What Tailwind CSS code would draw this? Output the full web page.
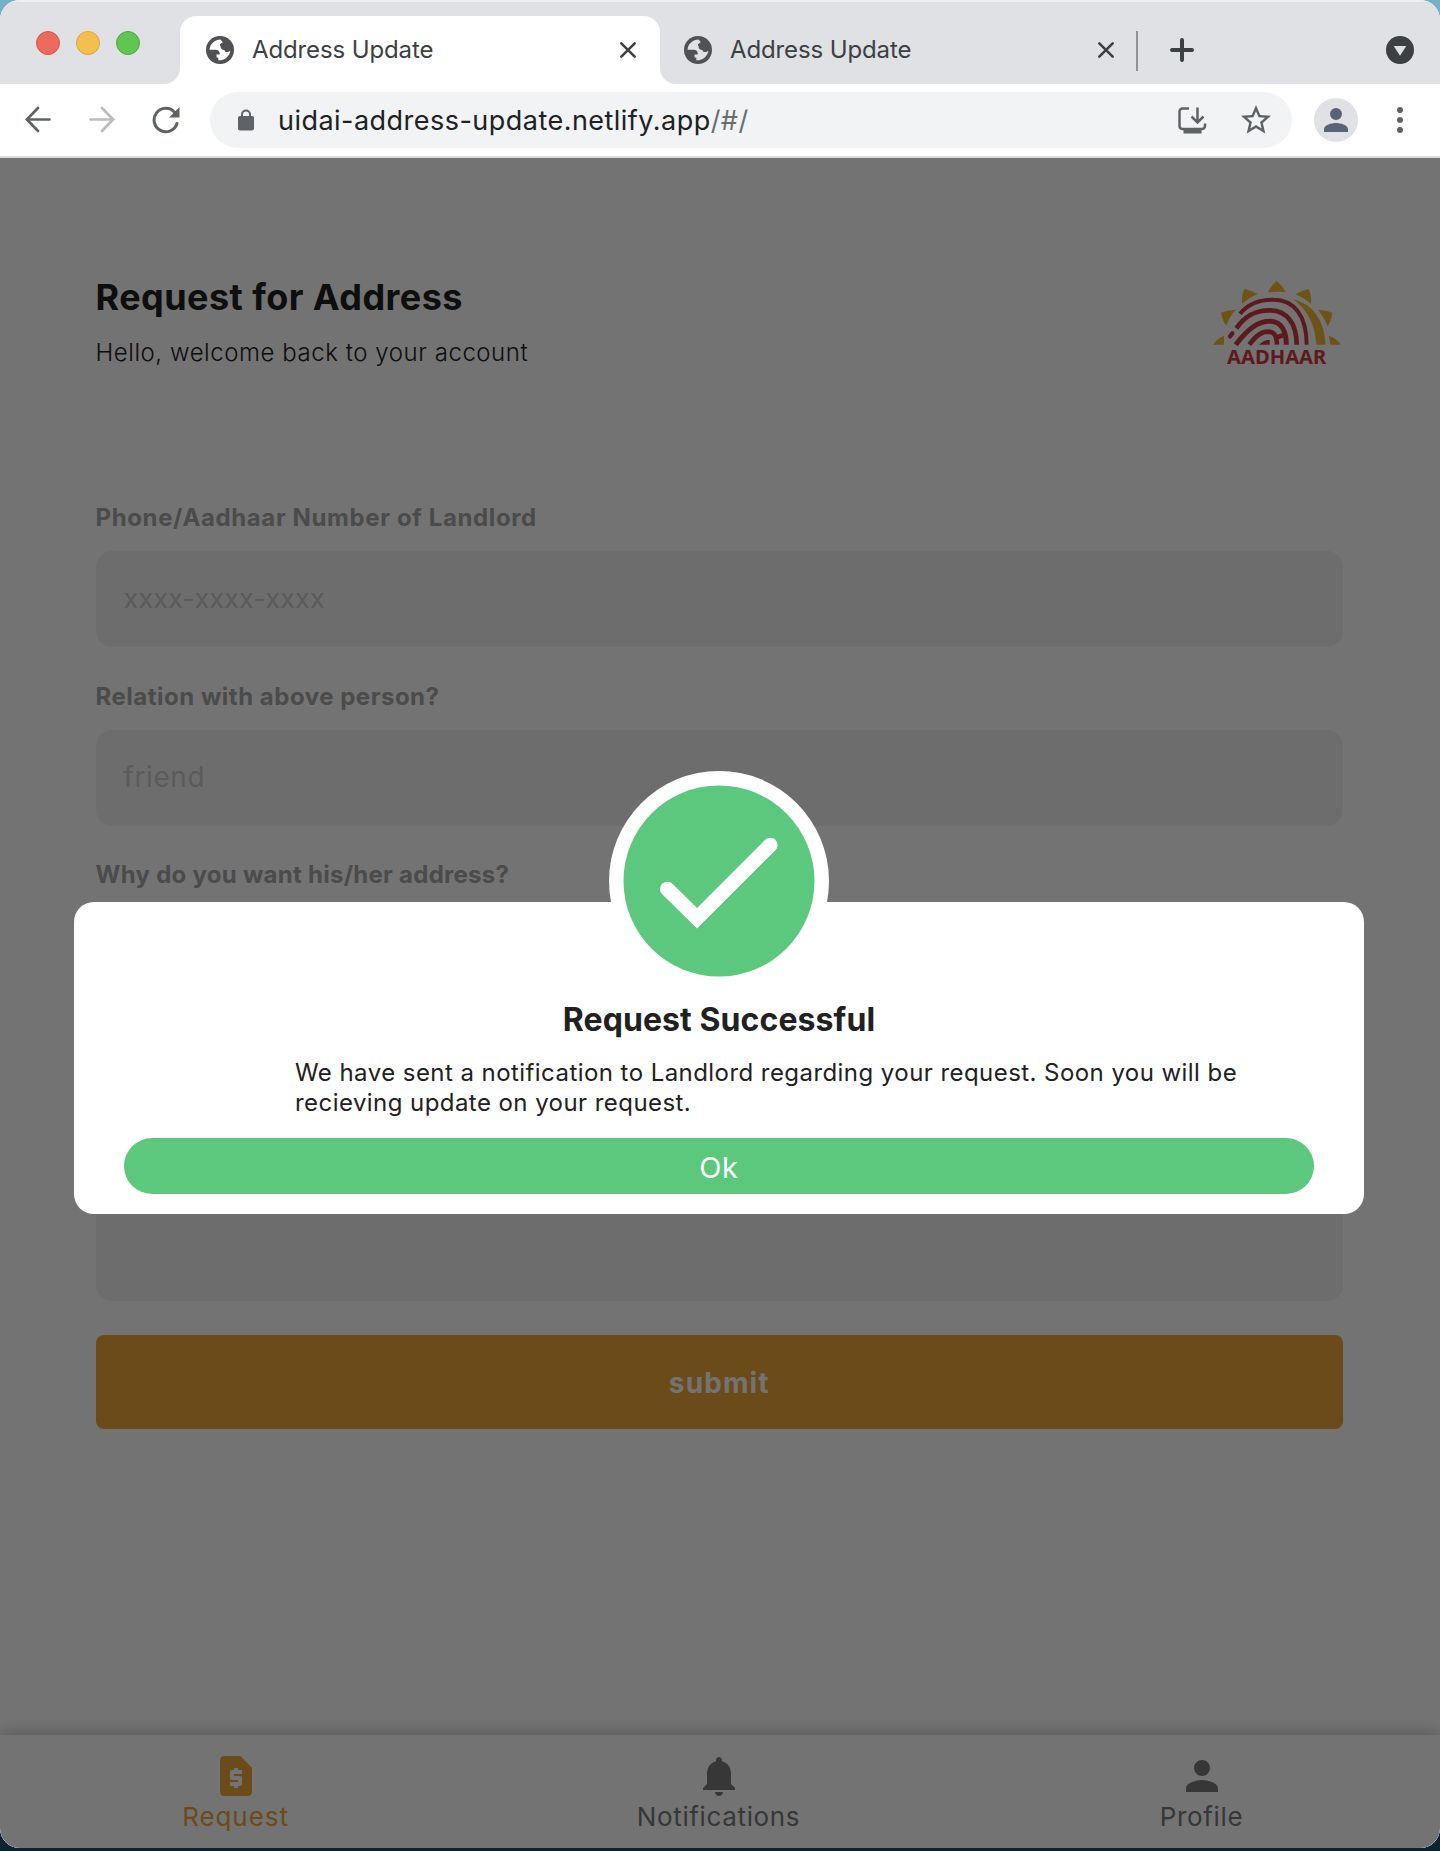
<!DOCTYPE html>
<html lang="en">
<head>
<meta charset="utf-8">
<title>Address Update</title>
<script src="https://cdn.jsdelivr.net/npm/@tailwindcss/browser@4"></script>
</head>
<body class="h-[1851px] w-[1440px] overflow-hidden bg-linear-to-b from-[#79afc6] from-5% to-[#0b2233] to-95% font-['Inter',sans-serif] whitespace-nowrap">
<div class="relative flex h-[1848px] flex-col overflow-hidden rounded-[20px] bg-white">

  <!-- Tab strip -->
  <header class="flex h-[84px] shrink-0 border-t-2 border-[#eceef1] bg-[#dfe1e5] text-[#3c4043]">
    <div class="flex w-[180px] gap-4 pt-[29px] pl-9">
      <span class="size-6 rounded-full border border-[#d5564a] bg-[#ed6a5e]"></span>
      <span class="size-6 rounded-full border border-[#d9a33c] bg-[#f5bf4f]"></span>
      <span class="size-6 rounded-full border border-[#4fa83f] bg-[#61c554]"></span>
    </div>
    <div class="relative mt-[14px] flex w-[480px] items-center rounded-t-2xl bg-white pr-[22px] pl-[26px]">
      <svg class="absolute bottom-0 -left-4 size-4" viewBox="0 0 16 16" fill="#fff"><path d="M16 0v16H0A16 16 0 0 0 16 0z"/></svg>
      <svg class="absolute -right-4 bottom-0 size-4" viewBox="0 0 16 16" fill="#fff"><path d="M0 0v16h16A16 16 0 0 1 0 0z"/></svg>
      <svg class="size-7" viewBox="0 0 28 28"><circle cx="14" cy="14" r="14" fill="#505155"/><path d="M14.6 3.6C8.800 3.600 4 8 3.500 13.700H9.500C12.300 13.700 13.700 15.200 13.700 17.600V18.500H10.500V21.500H12.300V24.300C18.500 24.800 23.800 20.500 24.300 14.500C22.300 16.800 18.700 16.600 18.500 13.900C15.800 13.900 14.600 12.700 14.600 10.200C12.600 8.200 15.500 7.500 16.800 6.300L14.600 3.600z" fill="#fff"/></svg>
      <span class="ml-[18px] flex-1 text-2xl tracking-[-0.12px]">Address Update</span>
      <svg class="size-5" viewBox="0 0 20 20" fill="none" stroke="#3c4043" stroke-width="2.6" stroke-linecap="round"><path d="M3.300 3.300l13.400 13.400M16.700 3.300L3.300 16.700"/></svg>
    </div>
    <div class="mt-[14px] flex w-[476px] items-center pr-5 pl-6">
      <svg class="size-7" viewBox="0 0 28 28"><circle cx="14" cy="14" r="14" fill="#505155"/><path d="M14.600 3.600C8.800 3.600 4 8 3.500 13.700H9.500C12.300 13.700 13.700 15.200 13.700 17.600V18.500H10.500V21.500H12.300V24.300C18.500 24.800 23.800 20.500 24.300 14.500C22.300 16.800 18.700 16.600 18.500 13.900C15.800 13.900 14.600 12.700 14.600 10.200C12.600 8.200 15.500 7.500 16.800 6.300L14.600 3.600z" fill="#dfe1e5"/></svg>
      <span class="ml-[18px] flex-1 text-2xl tracking-[-0.12px]">Address Update</span>
      <svg class="size-5" viewBox="0 0 20 20" fill="none" stroke="#3c4043" stroke-width="2.6" stroke-linecap="round"><path d="M3.300 3.300l13.400 13.400M16.700 3.300L3.300 16.700"/></svg>
    </div>
    <div class="mt-[29px] h-10 w-0.5 bg-[#8f9196]"></div>
    <div class="mt-[14px] flex flex-1 items-center justify-between pr-[26px] pl-8">
      <svg class="size-6" viewBox="0 0 24 24" fill="none" stroke="#3c4043" stroke-width="4" stroke-linecap="round"><path d="M12 2v20M2 12h20"/></svg>
      <svg class="size-7" viewBox="0 0 28 28"><circle cx="14" cy="14" r="14" fill="#3c4043"/><path d="M7.700 10h12.600L14 19.700z" fill="#dfe1e5"/></svg>
    </div>
  </header>

  <!-- Toolbar -->
  <div class="flex h-[74px] shrink-0 items-center border-b-2 border-[#dcdcdc] bg-white pl-[25px]">
    <svg class="h-7 w-[26px]" viewBox="0 0 26 28" fill="none" stroke="#5f6368" stroke-width="2.700" stroke-linecap="round"><path d="M24.500 13.500H2M13 2L1.800 13.500 13 25"/></svg>
    <svg class="ml-[38px] h-7 w-[26px]" viewBox="0 0 26 28" fill="none" stroke="#babcbe" stroke-width="2.700" stroke-linecap="round"><path d="M1.500 13.500h22.500M13 2l11.200 11.500L13 25"/></svg>
    <svg class="ml-[37px] size-7" viewBox="0 0 28 28"><path d="M22.500 6.200A11.700 11.700 0 1 0 25 17.500" fill="none" stroke="#5f6368" stroke-width="3" stroke-linecap="round"/><path d="M27.500 1v10.500H17z" fill="#5f6368"/></svg>
    <div class="ml-[30px] flex h-14 w-[1082px] items-center rounded-full bg-[#f1f3f4] pr-[18px] pl-7">
      <svg class="h-[22px] w-4" viewBox="0 0 16 22"><rect y="7" width="16" height="14.500" rx="2" fill="#5f6368"/><path d="M4 8V5.500a4 4 0 0 1 8 0V8" fill="none" stroke="#5f6368" stroke-width="2"/></svg>
      <span class="ml-6 flex-1 pt-0.5 text-[27px] leading-10 tracking-[0.47px] text-[#202124]">uidai-address-update.netlify.app<span class="text-[#6a6d70]">/#/</span></span>
      <svg class="h-7 w-[30px]" viewBox="0 0 30 28" fill="none" stroke="#5f6368" stroke-width="2.500"><path d="M12 2.500H5.500a3 3 0 0 0-3 3V20a3 3 0 0 0 3 3H25a3 3 0 0 0 3-3v-2.500M20.500 1.500V16M14.500 10.500l6 6 6-6"/><path d="M6.500 22h18v5.500h-18z" fill="#5f6368" stroke="none"/></svg>
      <svg class="ml-[31px] size-[36px]" viewBox="0 0 24 24" fill="#5f6368"><path d="M22 9.240l-7.190-.62L12 2 9.190 8.630 2 9.240l5.460 4.730L5.820 21 12 17.270 18.180 21l-1.630-7.030L22 9.240zM12 15.400l-3.760 2.270 1-4.280-3.320-2.880 4.380-.38L12 6.100l1.710 4.040 4.380.38-3.320 2.880 1 4.280L12 15.400z"/></svg>
    </div>
    <div class="ml-[22px] flex size-11 items-center justify-center rounded-full bg-[#dfe1e5]">
      <svg class="size-9" viewBox="0 0 24 24" fill="#5a6275"><path d="M12 12a4 4 0 1 0 0-8 4 4 0 0 0 0 8zm0 2c-2.670 0-8 1.340-8 4v2h16v-2c0-2.660-5.330-4-8-4z"/></svg>
    </div>
    <svg class="ml-[39px] h-7 w-[6px]" viewBox="0 0 6 28" fill="#5f6368"><circle cx="3" cy="4" r="3"/><circle cx="3" cy="14" r="3"/><circle cx="3" cy="24" r="3"/></svg>
  </div>

  <!-- Application -->
  <main class="relative flex flex-1 flex-col bg-white">
    <div class="flex-1 pt-[117px] pr-[97px] pl-[95.500px]">
      <div class="flex h-[227px] items-start justify-between">
        <div>
          <h1 class="text-[36px] leading-[44px] font-bold tracking-[0.450px] text-[#212121]">Request for Address</h1>
          <p class="mt-[18px] text-2xl leading-8 font-light tracking-[0.55px] text-[#212121]">Hello, welcome back to your account</p>
        </div>
        <svg class="mt-[5px] mr-0.5 h-[95px] w-32" viewBox="69 60 384 285">
          <g fill="#f5b931">
            <path d="M234 97Q244 76 260 63Q277 76 288 97Q261 94 234 97zM163 87Q186 92 203 102Q178 112 156 131Q154 107 163 87zM93 158Q113 149 137 150Q118 170 109 197Q97 182 93 158zM69 254Q80 237 102 227V254zM356 87Q334 92 316 103Q342 113 363 131Q365 107 356 87zM427 158Q407 149 384 150Q401 170 413 199Q424 182 427 158zM452 254Q440 235 417 227L421 254z"/>
            <path d="M309 117Q399 140 407 254H379Q374 165 309 117z"/>
          </g>
          <g fill="none" stroke="#cf3b43">
            <path d="M150 161C180 125 220 118 252 119C310 119 350 165 350 254" stroke-width="12"/>
            <path d="M139 205C170 160 205 150 242 151C290 152 320 190 320 254" stroke-width="14"/>
            <path d="M137 254C175 205 205 183 242 184C275 186 289 215 289 254" stroke-width="15"/>
            <path d="M178 254C200 225 215 215 235 215C256 216 260 230 261 254M261 232L280 226" stroke-width="14"/>
            <path d="M120 229L127 220" stroke-width="13" stroke-linecap="round"/>
          </g>
          <path d="M207 254Q222 238 239 240V254z" fill="#cf3b43"/>
          <text x="111" y="312" textLength="298" lengthAdjust="spacingAndGlyphs" class="font-['Noto_Sans'] text-[56px] font-bold" fill="#cf3b43">AADHAAR</text>
        </svg>
      </div>

      <form>
        <label class="block text-2xl leading-8 font-bold tracking-[0.62px] text-[#a6a6a6]">Phone/Aadhaar Number of Landlord</label>
        <div class="mt-[17px] flex h-24 items-center rounded-2xl bg-[#f2f2f2] pl-7 text-[27px] tracking-[0.15px] text-[#c9c9c9]">xxxx-xxxx-xxxx</div>
        <label class="mt-[34px] block text-2xl leading-8 font-bold tracking-[0.51px] text-[#a6a6a6]">Relation with above person?</label>
        <div class="mt-[17px] flex h-24 items-center rounded-2xl bg-[#f2f2f2] pb-0.5 pl-7 text-[28px] tracking-[0.600px] text-[#c9c9c9]">friend</div>
        <label class="mt-[33px] block text-2xl leading-8 font-bold tracking-[0.27px] text-[#a6a6a6]">Why do you want his/her address?</label>
        <div class="mt-[17px] h-[393px] rounded-2xl bg-[#f2f2f2]"></div>
        <button type="button" class="mt-[34px] flex h-[93.500px] w-full items-center justify-center rounded-lg bg-[#eba639] pt-0.5 text-[28px] font-bold tracking-[1.100px] text-white">submit</button>
      </form>
    </div>

    <nav class="flex h-[113px] shrink-0 justify-center gap-[283px] bg-white pt-[17px] pr-[3px] text-[26px] leading-[34px] text-[#7a7a7a] shadow-[0_0_16px_rgba(0,0,0,0.3)]">
      <a class="flex w-[200px] flex-col items-center text-[#eba639]">
        <svg class="size-12" viewBox="0 0 24 24" fill="currentColor"><path fill-rule="evenodd" d="M14.170 2H6C4.900 2 4 2.900 4 4v16c0 1.100.9 2 2 2h12c1.100 0 2-.9 2-2V7.830L14.170 2zM15 11h-4v1h3c.55 0 1 .45 1 1v3c0 .55-.45 1-1 1h-1v1h-2v-1H9v-2h4v-1h-3c-.55 0-1-.45-1-1v-3c0-.55.45-1 1-1h1V8h2v1h2z"/></svg>
        <span class="tracking-[0.920px]">Request</span>
      </a>
      <a class="flex w-[200px] flex-col items-center">
        <svg class="size-12" viewBox="0 0 24 24" fill="currentColor"><path d="M12 22c1.100 0 2-.9 2-2h-4c0 1.100.89 2 2 2zm6-6v-5c0-3.070-1.640-5.640-4.500-6.320V4c0-.83-.67-1.500-1.500-1.500s-1.500.67-1.500 1.500v.68C7.630 5.360 6 7.920 6 11v5l-2 2v1h16v-1l-2-2z"/></svg>
        <span class="tracking-[0.640px]">Notifications</span>
      </a>
      <a class="flex w-[200px] flex-col items-center">
        <svg class="size-12" viewBox="0 0 24 24" fill="currentColor"><path d="M12 12a4 4 0 1 0 0-8 4 4 0 0 0 0 8zm0 2c-2.670 0-8 1.340-8 4v2h16v-2c0-2.660-5.330-4-8-4z"/></svg>
        <span class="tracking-[0.630px]">Profile</span>
      </a>
    </nav>

    <!-- Dialog -->
    <div class="absolute inset-0 bg-black/55">
      <div class="absolute top-[743.600px] left-[74px] flex h-[312.700px] w-[1290px] flex-col rounded-[20px] bg-white px-[50px] pt-[98.800px] text-[#212121]">
        <svg class="absolute -top-[130.300px] left-[535px] size-[220px]" viewBox="0 0 220 220"><circle cx="110" cy="110" r="110" fill="#fff"/><circle cx="110" cy="110" r="95.500" fill="#5cc87d"/><path d="M58.300 118L88 147.300 161.300 74" fill="none" stroke="#fff" stroke-width="14.600" stroke-linecap="round"/></svg>
        <h2 class="text-center text-[32px] leading-10 font-bold tracking-[0.090px]">Request Successful</h2>
        <p class="mt-[18px] ml-[171px] text-2xl leading-[30px] tracking-[0.440px]">We have sent a notification to Landlord regarding your request. Soon you will be<br>recieving update on your request.</p>
        <button type="button" class="mt-[19.900px] flex h-14 shrink-0 items-center justify-center rounded-full bg-[#5cc87d] pt-0.5 text-[29px] tracking-[0.800px] text-white">Ok</button>
      </div>
    </div>
  </main>
</div>
</body>
</html>
